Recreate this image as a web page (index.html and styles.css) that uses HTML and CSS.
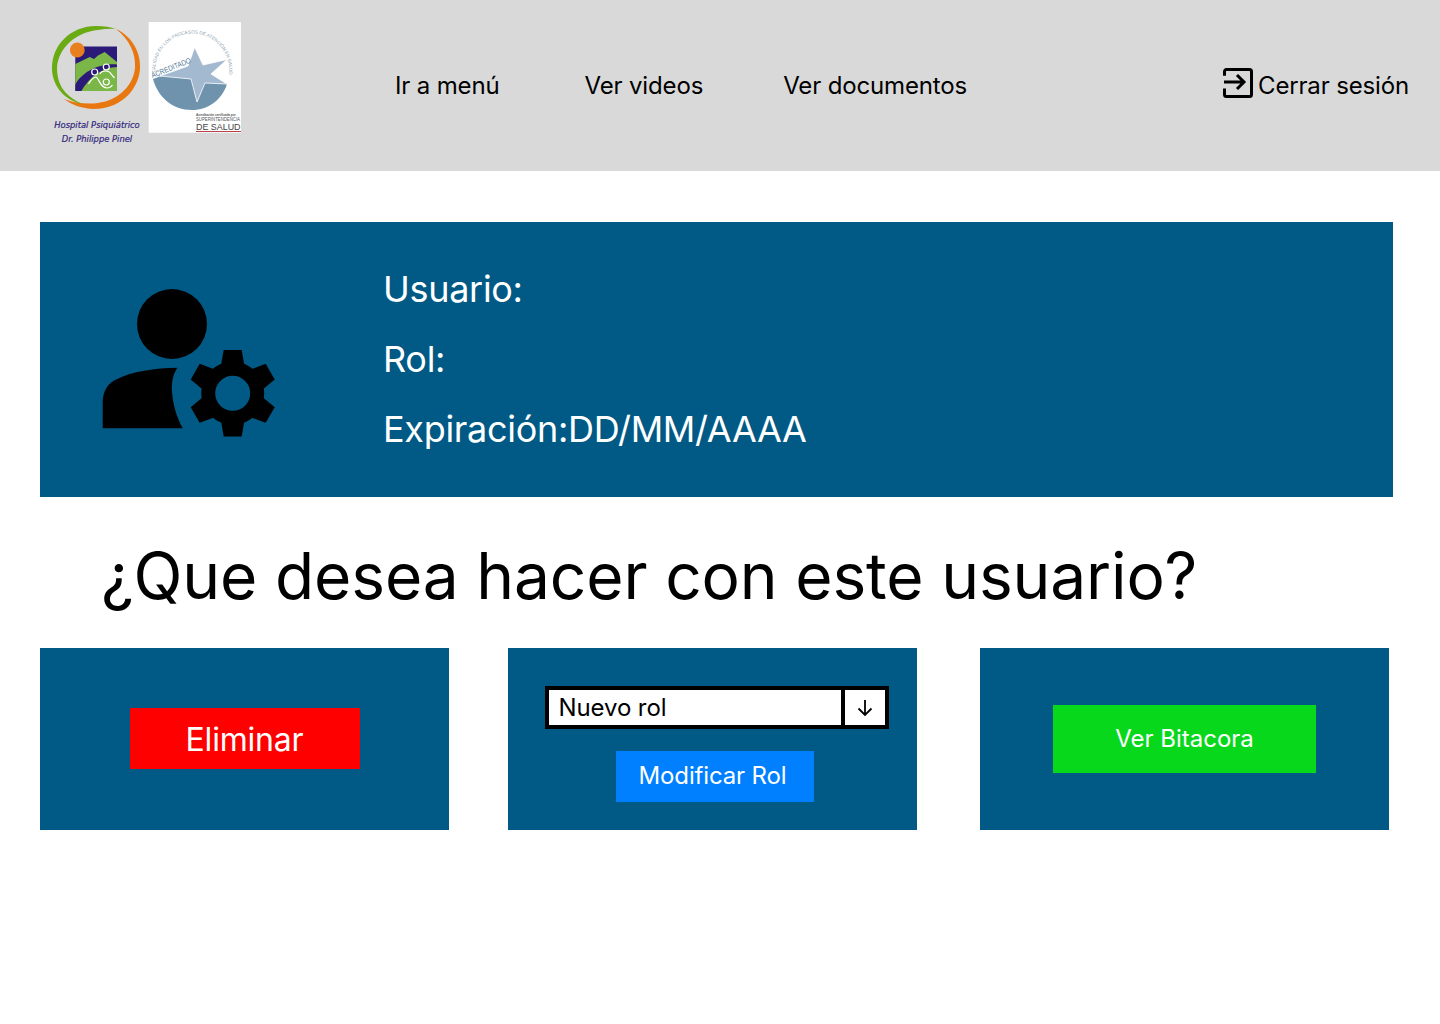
FILE: index.html
```html
<!DOCTYPE html>
<html lang="es">
<head>
<meta charset="utf-8">
<title>Usuario</title>
<link rel="stylesheet" href="styles.css">
</head>
<body>
<header class="topbar">
  <svg class="logos" viewBox="40 10 210 145" width="210" height="145" aria-label="Logos">
    <path fill="#e8770f" d="M116 29C133 37 141 53 140 69C138 93 117 110 92 109C81 108 72 105 64 99C73 102.500 83 104 94 103.500C115 102 133 88 135 68C136 54 130 40 116 29Z"/>
    <path fill="#6aaa12" d="M52 70C51 45 71 26 96 26C104 26 111 27 116 29C110 28.500 104 29 98 30C76 32 58 48 57 68C57 78 60 87 66 93C71 98 76 101 82 104C64 100 53 86 52 70Z"/>
    <rect x="75.300" y="46.500" width="41.700" height="44.500" fill="#2c1a78"/>
    <path fill="#7ab648" d="M75.300 64L89.700 57L94 59L98 55.500L104.700 52L117 62V91H75.300Z"/>
    <path fill="#2c1a78" d="M75.300 85C81 73 98 63 117 64.500V67C103 67 90 76 81.300 91H75.300Z"/>
    <circle cx="77.300" cy="50" r="7.400" fill="#e8801f"/>
    <g fill="none" stroke="#fff" stroke-width="1.200">
      <circle cx="106.300" cy="67" r="3"/>
      <circle cx="94.700" cy="72" r="3"/>
      <circle cx="106.300" cy="82" r="3"/>
      <path d="M88.500 84C91 80 94 77 96 77C99 78 100 88 107 88C109 88 111 87 112.500 85"/>
      <path d="M100 74C102 70 109 70 111 74L114.500 78"/>
    </g>
    <text class="logo-name" x="97" y="128" text-anchor="middle">Hospital Psiquiátrico</text>
    <text class="logo-name" x="97" y="142" text-anchor="middle">Dr. Philippe Pinel</text>
    <rect x="148.700" y="22" width="92.300" height="110.700" fill="#fff"/>
    <path fill="#6f93ad" d="M153 79C165 74 180 72 192 74L227 84C222 100 208 110 192 110C172 110 158 97 153 79Z"/>
    <path fill="#a3b9cf" stroke="#fff" stroke-width="0.800" d="M194.700 47.300L203 65L227 59.500L211 74L227 84L205 83L197 102L191 79L160 76L188 66Z"/>
    <text class="logo-seal" x="152.500" y="78" transform="rotate(-22 152.500 78)" textLength="42" lengthAdjust="spacingAndGlyphs">ACREDITADO</text>
    <path id="sealarc" fill="none" d="M155.300 72.500A37 37 0 1 1 228 80"/>
    <text class="logo-arc"><textPath href="#sealarc">CALIDAD EN LOS PROCESOS DE ATENCIÓN EN SALUD</textPath></text>
    <text class="logo-micro" x="196" y="116">Acreditación certificada por</text>
    <text class="logo-micro logo-micro-sup" x="196" y="121" textLength="44" lengthAdjust="spacingAndGlyphs">SUPERINTENDENCIA</text>
    <text class="logo-sal" x="196" y="129.500" textLength="44.500" lengthAdjust="spacingAndGlyphs">DE SALUD</text>
    <path stroke="#b8434a" stroke-width="1" d="M196 131.500H241"/>
  </svg>
  <nav class="menu">
    <a class="menu-item menu-first" href="#">Ir a menú</a>
    <a class="menu-item menu-second" href="#">Ver videos</a>
    <a class="menu-item" href="#">Ver documentos</a>
  </nav>
  <a class="logout" href="#">
    <svg class="logout-icon" viewBox="0 0 30 30" width="30" height="30" fill="none" stroke="#000" stroke-width="3">
      <path d="M1.500 7.700V3.500A2 2 0 0 1 3.500 1.500H26.500A2 2 0 0 1 28.500 3.500V26.500A2 2 0 0 1 26.500 28.500H3.500A2 2 0 0 1 1.500 26.500V20.500"/>
      <path d="M1 14H20.500M14 7L21 14L14 21"/>
    </svg>
    <span class="logout-label">Cerrar sesión</span>
  </a>
</header>
<main class="content">
  <section class="profile">
    <svg class="profile-icon" viewBox="100 285 178 155" width="178" height="155" aria-hidden="true">
      <circle cx="172" cy="324" r="35"/>
      <path d="M102.700 428.300V403C102.700 393 106 385 115 380C132 371 155 368 177.300 367.700C172 376 171.500 385 172 392C173 405 177 418 182.700 428.300Z"/>
      <g transform="translate(232.700 393.300)">
        <circle r="24.500" fill="none" stroke="#000" stroke-width="14"/>
        <path d="M-9 -43.300H9L12 -26H-12Z"/>
        <path transform="rotate(60)" d="M-9 -43.300H9L12 -26H-12Z"/>
        <path transform="rotate(120)" d="M-9 -43.300H9L12 -26H-12Z"/>
        <path transform="rotate(180)" d="M-9 -43.300H9L12 -26H-12Z"/>
        <path transform="rotate(240)" d="M-9 -43.300H9L12 -26H-12Z"/>
        <path transform="rotate(300)" d="M-9 -43.300H9L12 -26H-12Z"/>
      </g>
    </svg>
    <div class="profile-data">
      <p>Usuario:</p>
      <p>Rol:</p>
      <p>Expiración:DD/MM/AAAA</p>
    </div>
  </section>
  <h1 class="question">¿Que desea hacer con este usuario?</h1>
  <section class="cards">
    <div class="card">
      <button class="btn btn-delete">Eliminar</button>
    </div>
    <div class="card card-stack">
      <div class="select">
        <span class="select-value">Nuevo rol</span>
        <span class="select-arrow">
          <svg viewBox="0 0 16 18" width="16" height="18" fill="none" stroke="#000" stroke-width="1.800"><path d="M8 1V16M1.500 9.500L8 16L14.500 9.500"/></svg>
        </span>
      </div>
      <button class="btn btn-role">Modificar Rol</button>
    </div>
    <div class="card">
      <button class="btn btn-log">Ver Bitacora</button>
    </div>
  </section>
</main>
</body>
</html>
```
FILE: styles.css
```css
* {
  box-sizing: border-box;
}

html,
body {
  margin: 0;
  background: #fff;
}

body {
  font-family: Inter, "Liberation Sans", sans-serif;
  color: #000;
  min-height: 1024px;
}

.topbar {
  height: 171px;
  background: #d9d9d9;
  display: flex;
  align-items: flex-start;
  padding: 10px 31px 0 40px;
}

.logos {
  display: block;
  flex: none;
}

.logo-name {
  font-family: "DejaVu Sans", sans-serif;
  font-style: italic;
  font-size: 8.400px;
  fill: #32277c;
  stroke: #32277c;
  stroke-width: 0.200px;
}

.logo-seal {
  font-family: "Liberation Sans", sans-serif;
  font-size: 7.500px;
  fill: #4e7896;
}

.logo-arc {
  font-family: "Liberation Sans", sans-serif;
  font-size: 4.600px;
  fill: #8c9faf;
}

.logo-micro {
  font-family: "Liberation Sans", sans-serif;
  font-size: 3px;
  font-weight: 700;
  fill: #555;
}

.logo-micro-sup {
  font-size: 4.500px;
  font-weight: 400;
}

.logo-sal {
  font-family: "Liberation Sans", sans-serif;
  font-size: 9px;
  fill: #444;
}

.menu {
  display: flex;
  margin-left: 145px;
  margin-top: 61px;
}

.menu-item,
.logout {
  font-size: 24px;
  line-height: 29px;
  color: #000;
  text-decoration: none;
  letter-spacing: -0.150px;
}

.menu-first {
  margin-right: 85px;
}

.menu-second {
  margin-right: 80px;
}

.logout {
  margin-left: auto;
  margin-top: 58px;
  display: flex;
  align-items: flex-start;
  gap: 5px;
}

.logout-icon {
  display: block;
}

.logout-label {
  margin-top: 3px;
}

.content {
  padding: 51px 47px 0 40px;
}

.profile {
  height: 275px;
  background: #005a85;
  display: flex;
  align-items: flex-start;
}

.profile-icon {
  display: block;
  flex: none;
  margin: 63px 0 0 60px;
  height: 155px;
}

.profile-data {
  margin: 45px 0 0 105px;
  color: #fff;
  font-size: 36px;
  line-height: 44px;
  letter-spacing: -0.300px;
  display: flex;
  flex-direction: column;
  gap: 26px;
}

.profile-data p {
  margin: 0;
}

.question {
  margin: 40px 0 0 61px;
  font-size: 64px;
  font-weight: 400;
  line-height: 77px;
  letter-spacing: -0.150px;
}

.cards {
  margin-top: 34px;
  display: flex;
  width: 1349px;
  justify-content: space-between;
}

.card {
  width: 409px;
  height: 182px;
  background: #005a85;
  display: flex;
  align-items: center;
  justify-content: center;
}

.card:nth-child(2) {
  margin-left: -4px;
}

.card-stack {
  flex-direction: column;
  justify-content: flex-start;
  padding-top: 38px;
  gap: 22px;
}

.btn {
  border: 0;
  font-family: inherit;
  color: #fff;
  padding: 0;
  font-size: 24px;
}

.btn-delete {
  width: 230px;
  height: 61px;
  background: #ff0000;
  font-size: 32px;
  letter-spacing: -0.200px;
  margin-top: -2px;
  padding-top: 2px;
}

.btn-role {
  width: 198px;
  height: 51px;
  background: #0080ff;
  letter-spacing: -0.150px;
  margin-left: 4px;
  padding: 0 4px 2px 0;
}

.btn-log {
  width: 263px;
  height: 68px;
  background: #08d81c;
  padding-bottom: 2px;
}

.select {
  width: 344px;
  height: 43px;
  border: 4px solid #000;
  background: #fff;
  display: flex;
  font-size: 24px;
  line-height: 35px;
  letter-spacing: -0.100px;
  flex: none;
  margin-left: 8px;
}

.select-value {
  flex: 1;
  padding-left: 10px;
}

.select-arrow {
  width: 44px;
  border-left: 4px solid #000;
  display: flex;
  align-items: center;
  justify-content: center;
  padding-top: 1px;
}
```
